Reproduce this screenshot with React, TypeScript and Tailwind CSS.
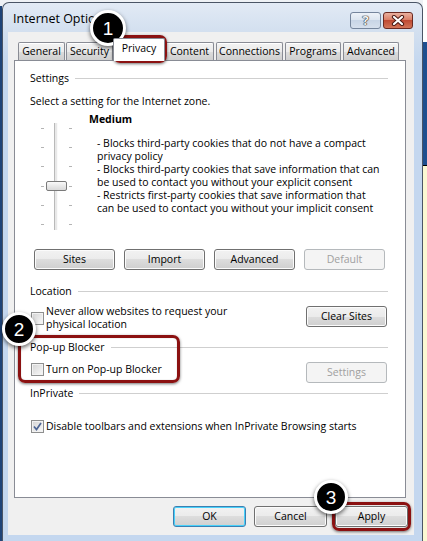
import type { ReactNode } from "react";

type Tab = { label: string; cls: string; active?: boolean };

const tabs: Tab[] = [
  { label: "General", cls: "ml-[10px] w-[47px]" },
  { label: "Security", cls: "ml-[1px] w-[47px]" },
  { label: "Privacy", cls: "w-[52px]", active: true },
  { label: "Content", cls: "w-[49px]" },
  { label: "Connections", cls: "ml-[2px] w-[67px]" },
  { label: "Programs", cls: "ml-[2px] w-[56px]" },
  { label: "Advanced", cls: "ml-[2px] w-[56px]" },
];

const description = [
  "- Blocks third-party cookies that do not have a compact",
  "privacy policy",
  "- Blocks third-party cookies that save information that can",
  "be used to contact you without your explicit consent",
  "- Restricts first-party cookies that save information that",
  "can be used to contact you without your implicit consent",
];

export default function App() {
  return (
    <div className="relative flex h-[541px] w-[427px] overflow-hidden bg-[#eef1f5] font-['Open_Sans',sans-serif] text-black">
      <div className="mt-[6px] w-[2px] shrink-0 bg-[#1f4478]" />

      <div className="mt-[2px] flex w-[421px] shrink-0 flex-col rounded-t-[7px] border border-b-0 border-[#4a5566] bg-[linear-gradient(#e2eaf5,#d2dfef_30px,#c4d7ef_60px)]">
        <TitleBar />

        <div className="ml-[5px] flex h-[503px] w-[406px] flex-col bg-[#f0f0f0] text-[10.5px] leading-[13px]">
          <div className="flex h-[28px] items-end pt-[6px]">
            {tabs.map((t) => (
              <TabButton key={t.label} tab={t} />
            ))}
          </div>
          <PrivacyPanel />
          <div className="mt-[8px] flex justify-end gap-[8px] pr-[6px]">
            <Btn label="OK" w="w-[73px]" primary />
            <Btn label="Cancel" w="w-[73px]" />
            <Btn label="Apply" w="w-[73px]" />
          </div>
        </div>
      </div>

      <div className="flex w-[4px] shrink-0 flex-col">
        <div className="h-[42px] bg-white" />
        <div className="h-[123px] bg-[#1e4f8f]" />
        <div className="flex-1 border-t border-black bg-[#fbf8d2]" />
      </div>

      {/* callouts */}
      <RedBox cls="left-[113px] top-[35px] h-[28px] w-[54px]" />
      <RedBox cls="left-[18px] top-[335px] h-[48px] w-[162px]" />
      <RedBox cls="left-[332px] top-[502px] h-[29px] w-[79px]" />
      <Badge n="1" cls="left-[90px] top-[10px] h-[36px] w-[36px]" />
      <Badge n="2" cls="left-[2px] top-[312px] h-[34px] w-[34px]" />
      <Badge n="3" cls="left-[314px] top-[480px] h-[34px] w-[34px]" />
    </div>
  );
}

function TitleBar() {
  return (
    <div className="flex h-[29px] shrink-0 items-start">
      <span className="pl-[10px] pt-[9px] text-[12.5px] leading-[14px] text-black">Internet Options</span>
      <div className="ml-auto mr-[9px] mt-[9px] flex gap-[2px]">
        <div className="flex h-[17px] w-[31px] items-center justify-center rounded-[3px] border border-[#75859c] bg-[linear-gradient(#edf2f8,#dbe4ef_50%,#c8d5e6_50%,#d6e0ed)] text-[13px] font-bold leading-none text-[#f4f4f4] [text-shadow:0_0_1px_#222,0_0_1px_#222,0_0_1px_#222]">
          ?
        </div>
        <div className="flex h-[17px] w-[30px] items-center justify-center rounded-[3px] border border-[#6b2a22] bg-[linear-gradient(#eab09f,#d97a62_50%,#c04a33_50%,#d27458)]">
          <svg width="14" height="11" viewBox="0 0 14 11">
            <path d="M3 2 L11 9 M11 2 L3 9" stroke="#4a1a14" strokeWidth="4.2" strokeLinecap="round" />
            <path d="M3 2 L11 9 M11 2 L3 9" stroke="#ffffff" strokeWidth="2.2" strokeLinecap="round" />
          </svg>
        </div>
      </div>
    </div>
  );
}

function TabButton({ tab }: { tab: Tab }) {
  if (tab.active) {
    return (
      <div
        className={`relative z-10 -mb-px flex h-[23px] items-center justify-center rounded-t-[2px] border border-b-0 border-[#898c95] bg-white pb-[3px] ${tab.cls}`}
      >
        {tab.label}
      </div>
    );
  }
  return (
    <div
      className={`flex h-[18px] items-center justify-center rounded-t-[2px] border border-b-0 border-[#898c95] bg-[linear-gradient(#f3f3f3,#ebebeb_50%,#dddddd_50%,#cfcfcf)] shadow-[inset_0_1px_0_#fff] ${tab.cls}`}
    >
      {tab.label}
    </div>
  );
}

function PrivacyPanel() {
  return (
    <div className="ml-[6px] flex h-[438px] w-[392px] flex-col border border-[#898c95] bg-white pl-[15px] pr-[17px] pt-[11px]">
      <Group label="Settings" />
      <p className="mt-[10px]">Select a setting for the Internet zone.</p>

      <div className="mt-[5px] flex">
        <Slider />
        <div className="ml-[17px] flex flex-col">
          <p className="font-bold">Medium</p>
          <div className="ml-[8px] mt-[11px]">
            {description.map((line) => (
              <p key={line}>{line}</p>
            ))}
          </div>
        </div>
      </div>

      <div className="ml-[4px] mt-[19px] flex gap-[9px]">
        <Btn label="Sites" w="w-[81px]" />
        <Btn label="Import" w="w-[81px]" />
        <Btn label="Advanced" w="w-[81px]" />
        <Btn label="Default" w="w-[81px]" disabled />
      </div>

      <div className="mt-[15px]">
        <Group label="Location" />
      </div>
      <div className="mt-[7px] flex items-start justify-between">
        <Check>
          <p>Never allow websites to request your</p>
          <p>physical location</p>
        </Check>
        <div className="mr-[1px] mt-[1px]">
          <Btn label="Clear Sites" w="w-[81px]" />
        </div>
      </div>

      <div className="mt-[10px]">
        <Group label="Pop-up Blocker" />
      </div>
      <div className="mt-[8px] flex items-start justify-between">
        <div className="mt-[1px]">
          <Check>
            <p>Turn on Pop-up Blocker</p>
          </Check>
        </div>
        <div className="mr-[1px]">
          <Btn label="Settings" w="w-[81px]" disabled />
        </div>
      </div>

      <div className="mt-[4px]">
        <Group label="InPrivate" />
      </div>
      <div className="mt-[20px]">
        <Check checked>
          <p>Disable toolbars and extensions when InPrivate Browsing starts</p>
        </Check>
      </div>
    </div>
  );
}

function Group({ label }: { label: string }) {
  return (
    <div className="flex h-[13px] items-center">
      <span className="whitespace-nowrap">{label}</span>
      <div className="ml-[6px] h-px flex-1 bg-[#cfcfcf]" />
    </div>
  );
}

function Slider() {
  const ticks = [0, 1, 2, 3, 4, 5];
  return (
    <div className="relative ml-[11px] mt-[10px] flex h-[107px]">
      <div className="flex flex-col justify-between py-[5px]">
        {ticks.map((i) => (
          <div key={i} className="h-px w-[3px] bg-[#b4b4b4]" />
        ))}
      </div>
      <div className="ml-[10px] w-[4px] border-l border-[#b9b9b9] bg-[#e8e8e8] shadow-[inset_-1px_0_0_#fafafa]" />
      <div className="ml-[11px] flex flex-col justify-between py-[5px]">
        {ticks.map((i) => (
          <div key={i} className="h-px w-[3px] bg-[#b4b4b4]" />
        ))}
      </div>
      <div className="absolute left-[5px] top-[58px] h-[10px] w-[21px] rounded-[2px] border border-[#7a7a7a] bg-[linear-gradient(#fafafa,#e9e9e9_50%,#dadada)]" />
    </div>
  );
}

function Check({ children, checked }: { children: ReactNode; checked?: boolean }) {
  return (
    <div className="ml-[1px] flex items-center gap-[2px]">
      <div className="flex h-[13px] w-[13px] shrink-0 items-center justify-center border border-[#8e8f8f] bg-[linear-gradient(135deg,#d4d4d4,#f9f9f9)] shadow-[inset_0_0_0_1px_#f2f2f2]">
        {checked && (
          <svg width="11" height="11" viewBox="0 0 11 11">
            <path d="M2 5.5 L4.5 8.5 L9 2" fill="none" stroke="#4d6594" strokeWidth="1.7" />
          </svg>
        )}
      </div>
      <div>{children}</div>
    </div>
  );
}

function Btn({ label, w, disabled, primary }: { label: string; w: string; disabled?: boolean; primary?: boolean }) {
  let look =
    "border-[#707070] bg-[linear-gradient(#f2f2f2,#ebebeb_50%,#dddddd_50%,#cfcfcf)] shadow-[inset_0_0_0_1px_#fbfbfb]";
  if (disabled) look = "border-[#b5b9bc] bg-[#f4f4f4] text-[#a0a0a0]";
  if (primary)
    look =
      "border-[#3c7fb1] bg-[linear-gradient(#f2f2f2,#ebebeb_50%,#dddddd_50%,#cfcfcf)] shadow-[inset_0_0_0_1px_#48d1fa]";
  return (
    <div className={`flex h-[21px] items-center justify-center rounded-[3px] border ${look} ${w}`}>{label}</div>
  );
}

function RedBox({ cls }: { cls: string }) {
  return (
    <div
      className={`pointer-events-none absolute rounded-[7px] border-[3px] border-[#8b1111] shadow-[0_1px_3px_rgba(0,0,0,0.55),inset_0_0_1px_rgba(0,0,0,0.4)] ${cls}`}
    />
  );
}

function Badge({ n, cls }: { n: string; cls: string }) {
  return (
    <div
      className={`absolute flex items-center justify-center rounded-full border-[3px] border-white bg-black font-['Liberation_Sans',sans-serif] text-[19px] leading-none text-white shadow-[0_2px_4px_rgba(0,0,0,0.6)] ${cls}`}
    >
      {n}
    </div>
  );
}
